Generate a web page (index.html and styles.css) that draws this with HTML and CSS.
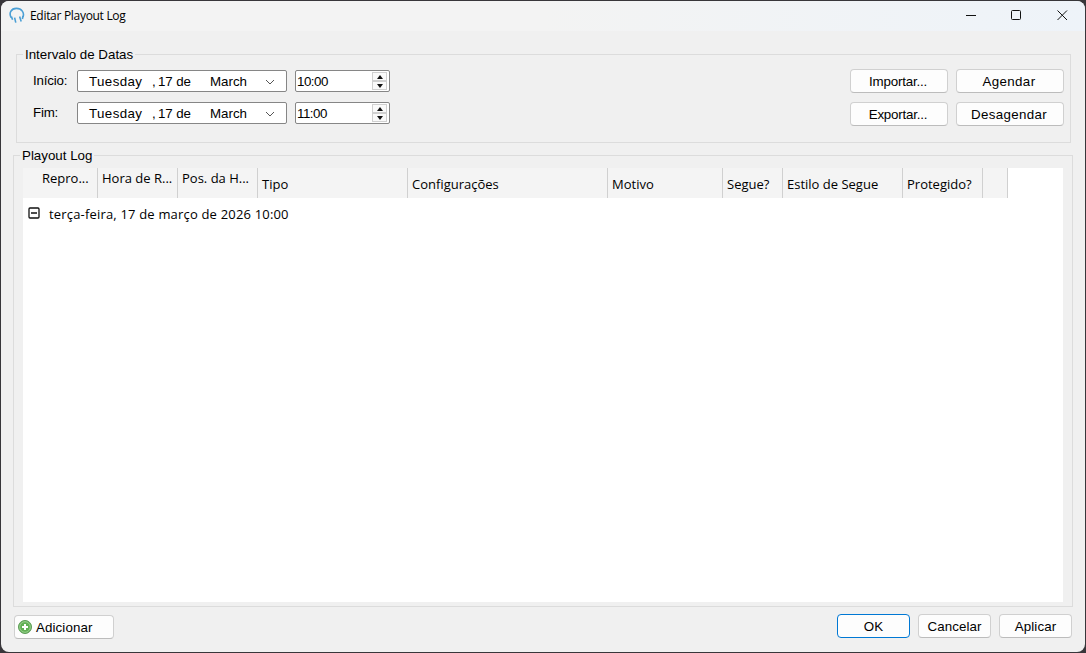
FILE: index.html
```
<!DOCTYPE html>
<html lang="pt">
<head>
    <meta charset="UTF-8">
    <title>Editar Playout Log</title>
    <link rel="stylesheet" href="styles.css">
</head>
<body>
<div class="window">
    <div class="titlebar">
        <svg class="app-icon" width="16" height="17" viewBox="0 0 16 17" fill="none" stroke="#4b9fd5">
            <path d="M2.2 10.6C-.4 6.2 2 1.4 7.4 1.4s8.2 4.4 6.6 8.6" stroke-width="1.6"/>
            <path d="M2.4 9.6l1.2 3.2M5.6 10.6l1.2 5M10.6 9.4l1.6 5M14 9l-.6 3" stroke-width="1.6"/>
        </svg>
        <span class="title">Editar Playout Log</span>
        <svg class="controls" width="104" height="12" viewBox="0 0 104 12" fill="none" stroke="#111">
            <path d="M0 6.5h10"/>
            <rect x="45.5" y="1.5" width="9" height="9" rx="1"/>
            <path d="M91.5 1.5l9.5 9.5M101 1.5L91.5 11"/>
        </svg>
    </div>
    <fieldset class="range">
        <legend>Intervalo de Datas</legend>
        <div class="dates">
            <div class="row">
                <label>Início:</label>
                <div class="date"><span class="day">Tuesday</span><span class="comma">,</span><span class="num">17 de</span><span class="month">March</span>
                    <svg width="10" height="6" viewBox="0 0 10 6" fill="none" stroke="#555"><path d="M1 1l4 4 4-4"/></svg>
                </div>
                <div class="time"><span>10:00</span><div class="spin"><i class="up"></i><i class="down"></i></div></div>
            </div>
            <div class="row">
                <label>Fim:</label>
                <div class="date"><span class="day">Tuesday</span><span class="comma">,</span><span class="num">17 de</span><span class="month">March</span>
                    <svg width="10" height="6" viewBox="0 0 10 6" fill="none" stroke="#555"><path d="M1 1l4 4 4-4"/></svg>
                </div>
                <div class="time"><span>11:00</span><div class="spin"><i class="up"></i><i class="down"></i></div></div>
            </div>
        </div>
        <div class="actions">
            <button class="file">Importar...</button>
            <button>Agendar</button>
            <button class="file">Exportar...</button>
            <button>Desagendar</button>
        </div>
    </fieldset>
    <fieldset class="log">
        <legend>Playout Log</legend>
        <div class="list">
            <div class="head">
                <span class="high first">Repro...</span>
                <span class="high">Hora de R...</span>
                <span class="high">Pos. da H...</span>
                <span>Tipo</span>
                <span>Configurações</span>
                <span>Motivo</span>
                <span>Segue?</span>
                <span>Estilo de Segue</span>
                <span>Protegido?</span>
                <span></span>
            </div>
            <div class="group">
                <svg width="12" height="12" viewBox="0 0 12 12" fill="none" stroke="#111">
                    <rect x="1" y="1" width="10" height="10" rx="1" stroke-width="1.3"/>
                    <path d="M3 6h6" stroke-width="1.3"/>
                </svg>
                <span>terça-feira, 17 de março de 2026 10:00</span>
            </div>
        </div>
    </fieldset>
    <div class="footer">
        <button class="add">
            <svg width="14" height="14" viewBox="0 0 14 14">
                <circle cx="7" cy="7" r="6.5" fill="#62b055" stroke="#5c9b57"/>
                <circle cx="7" cy="7" r="5.3" fill="none" stroke="#9bd090"/>
                <path d="M7 4v6M4 7h6" stroke="#fff" stroke-width="2"/>
            </svg>
            <span>Adicionar</span>
        </button>
        <button class="ok">OK</button>
        <button>Cancelar</button>
        <button>Aplicar</button>
    </div>
</div>
</body>
</html>
```
FILE: styles.css
```
*{
    box-sizing: border-box;
}
body{
    margin: 0;
    height: 653px;
    padding: 1px;
    overflow: hidden;
    background-color: #38363a;
    color: #000;
    font-family: "Liberation Sans", Arial, sans-serif;
    font-size: 13.33px;
    line-height: 16px;
}
.window{
    height: 651px;
    background-color: #f0f0f0;
    border-radius: 8px;
    overflow: hidden;
}
.titlebar{
    display: flex;
    height: 30px;
    padding-left: 8px;
    background: linear-gradient(90deg, #f3f3f3 50%, #eef3f9);
}
.app-icon{
    margin-top: 6px;
}
.title{
    margin: 7px 0 0 5px;
    font-family: "Open Sans", sans-serif;
    font-size: 12px;
    letter-spacing: -0.3px;
}
.controls{
    margin: 8px 15px 0 auto;
}
fieldset{
    margin: 0;
    padding: 0;
    border: 1px solid #dcdcdc;
}
legend{
    height: 16px;
    padding: 1px 2px 0;
    white-space: nowrap;
}
.range{
    display: flex;
    height: 97px;
    margin: 15px 14px 0 15px;
}
.range legend{
    margin-left: 6px;
}
.row{
    display: flex;
    height: 22px;
    margin: 8px 0 10px 16px;
}
.row label{
    width: 44px;
    padding-top: 3px;
    letter-spacing: -0.2px;
}
.date{
    display: flex;
    width: 210px;
    border: 1px solid #868686;
    border-radius: 2px;
    background-color: #fff;
    padding: 3px 0 0 12px;
}
.day{
    width: 63px;
    margin-left: -1px;
    letter-spacing: 0.4px;
}
.comma{
    width: 6px;
}
.num{
    width: 52px;
    letter-spacing: -0.1px;
}
.month{
    width: 55px;
}
.date svg{
    margin-top: 5px;
}
.time{
    display: flex;
    justify-content: space-between;
    width: 95px;
    margin-left: 8px;
    padding: 3px 2px 0;
    border: 1px solid #868686;
    border-radius: 2px;
    background-color: #fff;
}
.time span{
    margin-left: -1px;
    letter-spacing: -0.5px;
}
.spin{
    width: 15px;
    height: 18px;
    margin-top: -2px;
}
.spin i{
    display: flex;
    justify-content: center;
    align-items: center;
    height: 9px;
    border: 1px solid #d0d0d0;
    background-color: #fafafa;
}
.spin i::after{
    content: "";
    border: 3px solid transparent;
}
.spin .up::after{
    border-top-width: 0;
    border-bottom: 4px solid #111;
}
.spin .down::after{
    border-bottom-width: 0;
    border-top: 4px solid #111;
}
button{
    width: 73px;
    height: 24px;
    padding: 1px 0 0;
    border: 1px solid #d0d0d0;
    border-bottom-color: #bcbcbc;
    border-radius: 4px;
    background-color: #fdfdfd;
    color: #000;
    font: inherit;
    letter-spacing: 0.1px;
}
.actions{
    display: grid;
    grid-template-columns: 98px 108px;
    grid-auto-rows: 24px;
    gap: 9px 8px;
    margin: 7px 6px 0 auto;
}
.actions button{
    width: auto;
    padding-right: 2px;
    letter-spacing: 0.35px;
}
.actions .file{
    letter-spacing: -0.2px;
}
.log{
    height: 460px;
    margin: 4px 12px 0;
}
.log legend{
    margin-left: 6px;
}
.list{
    height: 434px;
    margin: 5px 9px 0 9px;
    background-color: #fff;
    font-family: "Open Sans", sans-serif;
    font-size: 13px;
}
.head{
    display: grid;
    grid-template-columns: 75px 80px 80px 150px 200px 115px 60px 120px 80px 25px;
    width: 985px;
    height: 30px;
    background-color: #f4f4f4;
    white-space: nowrap;
}
.head span{
    padding: 8px 0 0 4px;
    border-right: 1px solid #d0d0d0;
}
.head .high{
    padding-top: 2px;
}
.head .first{
    padding-left: 19px;
}
.group{
    display: flex;
    padding: 8px 0 0 5px;
    letter-spacing: 0.18px;
}
.group svg{
    margin: 1px 9px 0 0;
}
.footer{
    display: flex;
    gap: 8px;
    padding: 7px 13px 0;
}
.add{
    display: flex;
    align-items: center;
    width: 100px;
    margin: 1px auto 0 0;
    padding: 1px 0 0 3px;
}
.add svg{
    margin: -1px 4px 0 0;
}
.ok{
    border-color: #0078d4;
}
```
